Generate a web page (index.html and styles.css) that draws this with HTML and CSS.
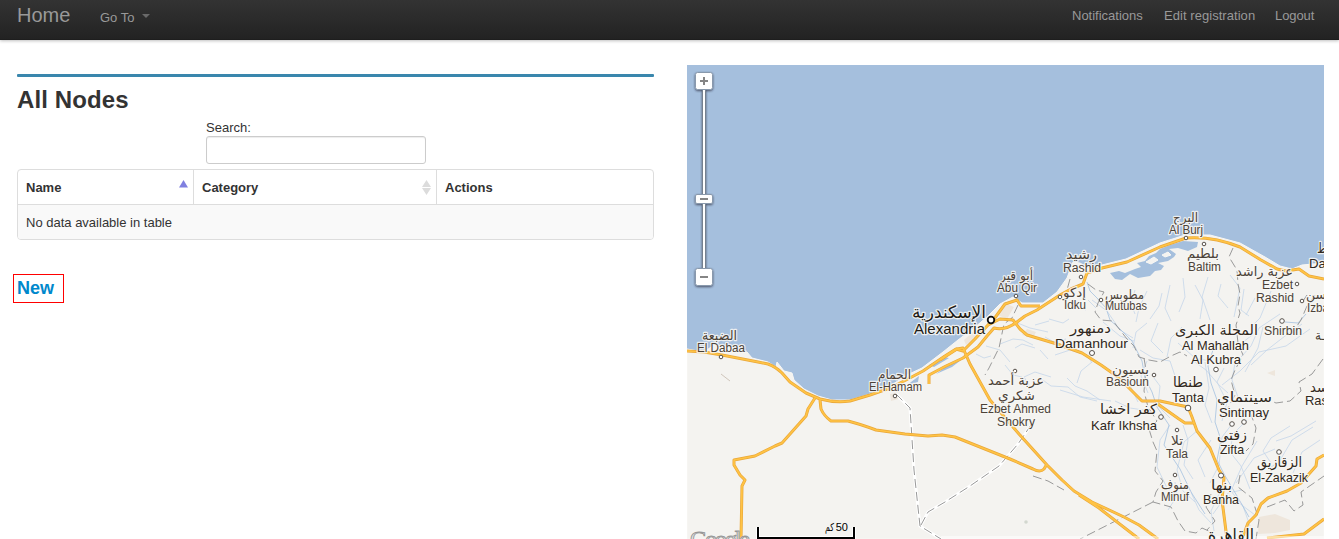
FILE: index.html
```
<!DOCTYPE html>
<html lang="en">
<head>
<meta charset="utf-8">
<title>All Nodes</title>
<link rel="stylesheet" href="styles.css">
</head>
<body>
<header class="navbar">
  <a class="brand">Home</a>
  <a class="goto">Go To <span class="caret"></span></a>
  <nav class="nav-right"><a class="n1">Notifications</a><a class="n2">Edit registration</a><a class="n3">Logout</a></nav>
</header>
<main class="content">
  <section class="nodes">
    <div class="rule"></div>
    <h1>All Nodes</h1>
    <div class="search"><label for="q">Search:</label><input id="q" type="text"></div>
    <div class="table">
      <div class="row head">
        <div class="cell">Name<svg class="sort" width="9" height="15" viewBox="0 0 9 15"><path d="M4.500 0L9 7.500H0z" fill="#8080e0"/></svg></div>
        <div class="cell">Category<svg class="sort" width="9" height="15" viewBox="0 0 9 15"><path d="M4.500 0L9 7H0zM0 8H9L4.500 15z" fill="#dcdcdc"/></svg></div>
        <div class="cell">Actions</div>
      </div>
      <div class="row empty"><div class="cell">No data available in table</div></div>
    </div>
    <a class="new">New</a>
  </section>
  <svg class="map" width="637" height="474" viewBox="687 65 637 474">
    <defs><filter id="sh" x="-30%" y="-30%" width="160%" height="180%"><feDropShadow dx="0" dy="1" stdDeviation="1" flood-color="#223" flood-opacity=".7"/></filter></defs>
    <rect class="sea" x="687" y="65" width="637" height="474"/>
    <path class="land" d="M687 349L704 352L714 345L731 348L738 353L747 352L752 358L768 362L776 367L777 362L784 371L792 373L794 380L804 389L818 396L832 400L850 400L870 394L890 386L907 375L922 368L943 352L958 340L974 328L988 316L1000 304L1013 297L1022 303L1043 303L1057 292L1067 278L1073 262L1080 263L1088 268L1102 265L1126 259L1160 243L1185 235L1210 235L1240 243L1265 257L1280 266L1292 269L1302 265L1324 263V539H687Z"/>
    <!-- lagoons -->
    <g class="sea">
      <path d="M1110 273L1119 271L1125 273L1135 269L1141 267L1137 263L1145 261L1149 256L1156 253L1160 249L1170 245L1183 241L1198 242L1197 247L1188 251L1178 248L1169 249L1176 254L1174 257L1168 261L1158 263L1164 266L1161 270L1155 271L1150 276L1138 278L1130 274L1122 280L1115 279Z"/>
      <path d="M929 365L944 357L949 358L934 367ZM936 374L951 363L965 357L952 367ZM907 385L919 376L918 382Z"/>
    </g>
    <path class="land" d="M1146 262L1154 257L1158 260L1151 264ZM1162 255L1168 252L1171 255L1165 257Z"/>
    <path class="urban" d="M964 340L975 330L980 335L966 345ZM998 315L1007 304L1014 307L1007 319ZM890 394L897 393L898 399L891 401ZM1259 517L1275 514L1290 520L1290 530L1275 533L1258 534ZM1027 329L1036 332L1033 338L1022 335ZM1267 373L1275 370L1275 376Z"/>
    <g class="river">
      <path d="M976 354l8 4 7-2M986 346l14 4 10 12M1000 344l13-5 10 1 10 5M1005 365l8 10 9 2 7 10M1015 348l7-4 13 4M1010 320l20 8 18 4M1045 337l9 5 12-3M1029 385l-5-8 11-5 16 5M1040 378l11 8 17 1 12 10 17 4M1067 378l8 8 12 5 13 9M1092 362l-11 9-4 12M1035 325l14-4M1049 319l14 4 6-4M1070 305l16 5M1088 300l8 8M1040 350l8 9M1055 355l15-5 17 5 5 8M1060 390l23 7 28 4"/>
      <path d="M1135 290l-4 14 4 10M1147 291l-8 17-3 14M1162 293l-3 13-9 13M1170 285l-5 23 6 13M1183 278l2 19-6 15M1195 285l8 15-3 19M1208 277l-6 20 8 23M1221 284l-3 12 10 12M1230 275l10 13-6 29M1244 289l-3 21 8 6M1255 298l-9 17M1271 291l-11 27-7 7M1280 314l-21 14-8 18-10 11M1302 324l-17 12-18 14-16 15M1310 329l-24 17-27 6-19 19-18 14"/>
      <path d="M1092 300l15 11 13 19 13 8M1103 322l17 14 14 5M1147 323l-11 9-3 16M1158 323l-7 18 12 12M1182 327l-11 11-4 19M1140 350l13 8 17 3 5 15M1154 378l6 8-2 20 12 12M1147 361l-6 15 7 17M1192 360l14 10 13 15 9 8M1205 362l4 26-4 17 7 18M1224 368l-7 14 10 20-5 19M1235 363l-3 17 8 23M1178 343l17 15 28 6M1118 374l12 11 8 17M1115 401l15 7 20 3M1255 333l-12 9M1263 327l-5 21-13 24"/>
      <path d="M1170 425l-10 15-3 27 10 21M1183 425l5 15-4 25 9 14M1198 430l-14 12-7 28 6 21 12 11M1211 440l-13 20 7 17M1232 424l-10 13-3 28-9 18M1247 420l-14 14-3 18 11 14 9 23M1257 441l-15 25-11 25 12 15 12 9M1275 449l-21 9-18 25M1290 426l-19 12-8 13 8 12M1313 427l-21 13-13 22-8 5M1320 440l-18 12-9 21M1316 421l-25 15-15 5M1175 482l2 14-9 14M1190 490l9 20 12 13M1220 492l-9 19 3 20M1229 495l14 11 7 20M1242 490l-14 3-15 21"/>
    </g>
    <path class="major-river" d="M1087 282L1090 291L1097 298L1106 308L1110 320L1120 329L1132 341L1142 361L1145 378L1152 392L1157 407L1169 425L1164 445L1180 469L1191 492L1205 514M1285 322L1298 323L1306 314M1216 340L1208 366L1211 383L1217 400L1215 422L1221 440L1217 460L1224 474L1237 496L1249 517"/>
    <path class="boundary-bg" d="M896 394L910 408L914 470L920 526L941 539M921 525L928 512L945 502L970 486L999 466L1018 444L1031 425"/>
    <g class="boundary">
      <path d="M896 394L910 408L914 470L920 526L941 539M921 525L928 512L945 502L970 486L999 466L1018 444L1031 425M1088 284L1096 290L1104 292L1098 303L1095 312L1101 320L1113 321L1127 339L1134 346L1139 357L1149 360L1160 362L1171 356L1180 352L1187 356M1033 476L1048 481L1064 490M1018 305L1012 318L1004 324L999 348L989 368L985 375"/>
      <path d="M1233 248L1229 257L1237 270L1238 284L1240 294L1238 306L1240 313L1236 325L1238 343L1243 355L1235 370L1231 380L1235 395L1228 408M1315 295L1307 306L1301 320L1295 329M1323 359L1312 374L1299 382L1301 391L1290 401L1276 403L1269 400M1144 358L1146 370L1144 391L1148 407L1157 421L1149 429L1153 442L1157 451L1155 471L1163 481L1156 492L1153 502L1171 507L1178 521L1185 531L1196 533L1202 528L1211 532M1153 502L1080 539M1250 412L1256 428L1253 444L1246 451M1211 494L1206 507L1215 521L1207 530M1240 475L1238 487L1252 498L1259 520L1256 539M1267 507L1285 500L1294 511L1303 505L1301 492L1324 476"/>
      <path d="M1307 295L1303 301M1070 279L1067 290"/>
    </g>
    <path d="M721 374L730 381" stroke="#cfc5bb"/>
    <defs><g id="roads">
      <path d="M687 351L704 352L722 355L758 362L768 364Q776 367 782 373L790 382L806 393L820 399Q835 403 850 401L870 395L890 388L906 380L923 371L945 356L956 349L963 351L975 339L988 325L994 319L1005 304L1017 300L1021 306L1040 306"/>
      <path d="M929 384V375L946 366L963 358L978 347L987 336L994 328Q1005 331 1017 322L1025 316L1037 310L1060 295L1071 289L1083 284L1087 273L1102 268L1127 262L1160 247L1186 238Q1213 236 1240 247L1261 260L1277 269L1286 271L1299 269L1309 276L1324 279"/>
      <path d="M988 325L1000 319L1013 320L1020 329L1027 335L1057 344L1082 353L1101 365L1118 377L1142 401L1160 401L1188 407L1192 417L1197 431L1210 448L1219 470L1224 478L1222 500L1227 539"/>
      <path d="M940 360L957 349L963 348L970 364L990 400L1019 434L1047 465L1062 480L1074 491L1092 502L1124 517L1139 525L1158 539M1079 495L1099 508L1139 539M1158 404L1162 407L1179 419L1185 423L1194 423"/>
      <path d="M815 398L808 409L806 416L782 443L775 446L755 456L734 460V465L740 475L745 480L742 486L741 539M820 400L821 409Q824 416 831 421L848 421Q860 424 876 430L905 434L928 436L942 435L955 437L1010 459L1033 469Q1040 473 1044 469L1047 464"/>
      <path d="M1324 455L1317 459L1316 466L1301 483L1287 491L1268 498L1261 504L1256 515L1248 523L1242 539M1324 519L1304 534L1267 538"/>
    </g></defs>
    <use href="#roads" class="road-edge"/><use href="#roads" class="road"/>
    <rect x="941" y="536" width="383" height="3" fill="#fff" opacity=".5"/>
    <g class="dots">
      <circle cx="721" cy="357" r="1.800"/><circle cx="895" cy="396" r="1.800"/><circle cx="1016" cy="296" r="1.800"/><circle cx="1081" cy="277" r="1.800"/><circle cx="1060" cy="297" r="1.800"/><circle cx="1101" cy="300" r="1.800"/><circle cx="1186" cy="238" r="1.800"/><circle cx="1204" cy="244" r="1.800"/><circle cx="1297" cy="284" r="1.800"/><circle cx="1302" cy="301" r="1.800"/><circle cx="1282" cy="321" r="2.300"/><circle cx="1092" cy="353" r="2.500"/><circle cx="1015" cy="371" r="1.800"/><circle cx="1154" cy="375" r="1.800"/><circle cx="1216" cy="369.500" r="2.300"/><circle cx="1188" cy="408" r="2.800"/><circle cx="1161" cy="417" r="2.300"/><circle cx="1232" cy="424" r="2.300"/><circle cx="1244" cy="422" r="2.300"/><circle cx="1177" cy="430" r="1.800"/><circle cx="1175" cy="475" r="1.800"/><circle cx="1221" cy="475.500" r="2.500"/><circle cx="1279" cy="452" r="2.300"/>
      <circle cx="991" cy="320" r="3.300" stroke-width="1.800"/>
    </g>
    <circle cx="1026" cy="522" r="1.800" fill="#d3d7cf"/>
    <g id="labels"></g>
    <text class="google" x="690" y="547" textLength="60">Google</text>
    <path d="M758 527V538H854V527" fill="none" stroke="#fff" stroke-width="4"/><path d="M758 527V538H854V527" fill="none" stroke="#000" stroke-width="2"/>
    <text class="scale" x="848" y="531">50</text><text class="scale" x="834" y="531" textLength="9" lengthAdjust="spacingAndGlyphs">كم</text>
    <!-- zoom slider -->
    <g filter="url(#sh)"><rect x="702.500" y="88" width="3" height="182" fill="#fff" stroke="#74818f"/><g fill="#fff" stroke="#8999ac"><rect x="695.500" y="72.500" width="17" height="17" rx="2"/><rect x="695.500" y="194.500" width="17" height="9" rx="1.500"/><rect x="695.500" y="268.500" width="17" height="17" rx="2"/></g></g>
    <path d="M700 81H708M704 77V85M700 199H708M700 277H708" stroke="#858585" stroke-width="2"/>
  </svg>
</main>
<script src="map.js"></script>
</body>
</html>
```
FILE: styles.css
```
* { box-sizing: border-box; }
body { margin: 0; height: 539px; overflow: hidden; background: #fff; color: #333; font: 13px/18px "Liberation Sans", Arial, sans-serif; }
.navbar { display: flex; height: 40px; padding: 0 25px 0 17px; background: linear-gradient(#333, #222); color: #999; box-shadow: 0 1px 3px rgba(0,0,0,.25), inset 0 -1px 0 rgba(0,0,0,.1); }
.brand { width: 83px; font-size: 20px; line-height: 30px; }
.goto { padding-top: 9px; }
.caret { display: inline-block; margin-left: 4px; vertical-align: 4px; border: 4px solid transparent; border-top-color: #696969; border-bottom: 0; }
.nav-right { display: flex; gap: 20px; margin-left: auto; padding-top: 7px; white-space: nowrap; }
.n1 { width: 72px; }
.n2 { width: 91px; letter-spacing: .05px; }
.n3 { width: 39px; letter-spacing: -.1px; }
.content { display: flex; gap: 33px; padding: 25px 15px 0 17px; }
.nodes { width: 637px; padding-top: 9px; }
.rule { height: 3px; background: #3a87ad; border-radius: 1px; }
h1 { margin: 5px 0 0; font-size: 24px; line-height: 36px; letter-spacing: .1px; }
.search { width: 220px; margin-left: 189px; }
.search label { display: block; height: 18px; line-height: 20px; }
.search input { display: block; width: 220px; height: 28px; border: 1px solid #ccc; border-radius: 3px; box-shadow: inset 0 1px 1px rgba(0,0,0,.075); }
.table { margin-top: 5px; border: 1px solid #ddd; border-radius: 4px; overflow: hidden; }
.row { display: grid; grid-template-columns: 175px 243px 1fr; height: 34px; }
.cell { display: flex; justify-content: space-between; padding: 9px 5px 8px 8px; }
.head { font-weight: bold; }
.head .cell + .cell { border-left: 1px solid #ddd; }
.sort { margin-top: 1px; }
.empty { display: block; height: 35px; border-top: 1px solid #ddd; background: #f9f9f9; }
.new { display: block; width: 51px; height: 29px; margin: 34px 0 0 -4px; padding-left: 3px; border: 1px solid #f00; color: #08c; font-size: 18px; font-weight: bold; line-height: 26px; }
.map { display: block; flex: none; }
.sea { fill: #a5bfdd; }
.land { fill: #f4f3f0; stroke: #f8f7f4; stroke-width: 1; }
.urban { fill: #eee6dc; }
.river, .major-river { fill: none; stroke: #bdd1e8; stroke-width: .8; opacity: .85; }
.major-river { stroke: #a9c4e1; stroke-width: 1; }
.boundary, .boundary-bg { fill: none; stroke: #999; stroke-width: 1; stroke-dasharray: 9 4; }
.boundary-bg { stroke: #fff; stroke-width: 3; stroke-dasharray: none; }
.road, .road-edge { fill: none; stroke: #ffc345; stroke-width: 1.7; stroke-linejoin: round; }
.road-edge { stroke: #e9a73a; stroke-width: 3; }
.dots { fill: #fff; stroke: #56504a; stroke-width: 1; }
.dots circle:last-child { stroke: #111; }
.label { font-family: "Liberation Sans", sans-serif; fill: #4b4238; stroke: #f8f7f4; stroke-opacity: .85; stroke-width: 2.5px; stroke-linejoin: round; paint-order: stroke; }
.small { font-size: 12px; }
.medium { font-size: 13px; fill: #302820; }
.large { font-size: 14.5px; fill: #211b16; }
.arabic { font-family: "DejaVu Sans", sans-serif; }
.small.arabic { font-size: 13px; }
.medium.arabic { font-size: 14px; }
.large.arabic { font-size: 17px; }
.google { font: 24px "Liberation Serif", serif; fill: #e4e4e2; stroke: #969696; stroke-width: .9; }
.scale { font: 11px "Liberation Sans", "DejaVu Sans", sans-serif; text-anchor: end; fill: #000; }
```
FILE: map.js
```
// Place labels: [left, baseline, width, text]
const places = {
  small: [
    [702,340,35,'الضبعة'],[697,352,48,'El Dabaa'],
    [878,379,33,'الحمام'],[869,391,53,'El-Hamam'],
    [1000,280,33,'أبو قير'],[997,292,40,'Abu Qir'],
    [1066,259,31,'رشيد'],[1063,272,38,'Rashid'],
    [1063,297,23,'إدكو'],[1064,309,22,'Idku'],
    [1105,299,39,'مطوبس'],[1105,310,42,'Mutubas'],
    [1173,222,25,'البرج'],[1169,234,34,'Al Burj'],
    [1187,258,32,'بلطيم'],[1188,271,33,'Baltim'],
    [1236,276,57,'عزبة راشد'],[1262,289,31,'Ezbet'],[1256,302,38,'Rashid'],
    [1264,335,38,'Shirbin'],
    [988,385,56,'عزبة أحمد'],[998,400,37,'شكري'],[980,413,71,'Ezbet Ahmed'],[997,426,38,'Shokry'],
    [1112,374,37,'بسيون'],[1106,386,43,'Basioun'],
    [1171,445,12,'تلا'],[1166,458,22,'Tala'],
    [1161,489,28,'منوف'],[1161,501,28,'Minuf'],
    [1306,299,20,'سن'],[1307,312,22,'Izba'],
    [1315,340,10,'ـة']
  ],
  medium: [
    [1175,335,83,'المحلة الكبرى'],[1182,350,67,'Al Mahallah'],[1191,364,50,'Al Kubra'],
    [1100,414,57,'كفر اخشا'],[1091,430,66,'Kafr Ikhsha'],
    [1173,387,30,'طنطا'],[1172,402,32,'Tanta'],
    [1217,402,55,'سينتماي'],[1219,417,50,'Sintimay'],
    [1217,440,30,'زفتى'],[1220,454,24,'Zifta'],
    [1257,467,45,'الزقازيق'],[1250,482,58,'El-Zakazik'],
    [1211,490,21,'بنها'],[1203,504,36,'Banha'],
    [1070,333,41,'دمنهور'],[1055,348,73,'Damanhour'],
    [1317,253,10,'ط'],[1309,268,17,'Da'],
    [1310,392,18,'سد'],[1305,405,23,'Ras']
  ],
  large: [[912,318,74,'الإسكندرية'],[914,334,71,'Alexandria'],[1208,541,46,'القاهرة']]
};

const layer = document.getElementById('labels');
for (const [size, items] of Object.entries(places)) {
  for (const [x, y, width, name] of items) {
    const label = document.createElementNS('http://www.w3.org/2000/svg', 'text');
    const arabic = /[\u0600-\u06ff]/.test(name);
    label.setAttribute('class', `label ${size}${arabic ? ' arabic' : ''}`);
    label.setAttribute('x', x);
    label.setAttribute('y', y);
    label.setAttribute('textLength', width);
    label.setAttribute('lengthAdjust', 'spacingAndGlyphs');
    label.textContent = name;
    layer.appendChild(label);
  }
}
```
